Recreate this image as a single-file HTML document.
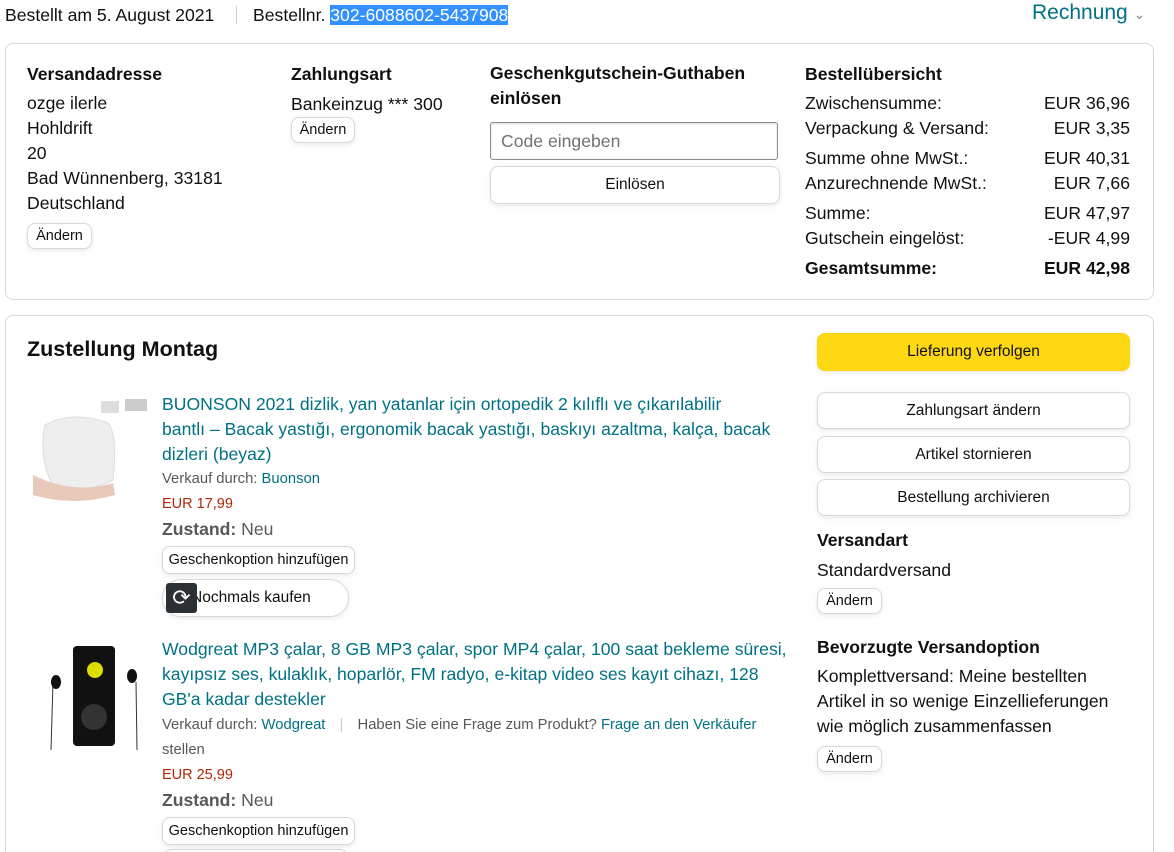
<!DOCTYPE html>
<html><head><meta charset="utf-8"><style>
*{box-sizing:border-box;margin:0;padding:0}
html,body{width:1174px;height:852px;overflow:hidden}
body{background:#fff;font-family:"Liberation Sans",Arial,sans-serif;color:#0f1111;font-size:17.6px;position:relative}
.a{position:absolute;white-space:nowrap}
.box{position:absolute;border:1px solid #d5d9d9;border-radius:8px}
.b{font-weight:bold}
.btn{position:absolute;border:1px solid #d5d9d9;border-radius:8px;background:#fff;box-shadow:0 2px 5px rgba(213,217,217,.5);font-size:14.5px;text-align:center;display:flex;align-items:center;justify-content:center}
.big{font-size:15.5px;border-radius:8px}
.link{color:#007185}
.sm{font-size:14.8px;color:#565959}
.pr{font-size:14.5px;color:#b12704}
.lh{line-height:25px}
</style></head><body>
<div class="a" style="left:5px;top:5px">Bestellt am 5. August 2021</div>
<div class="a" style="left:236px;top:6px;width:1px;height:18px;background:#ccc"></div>
<div class="a" style="left:253px;top:5px">Bestellnr. <span style="background:#3390ff;color:#fff">302-6088602-5437908</span></div>
<div class="a link" style="left:1032px;top:1px;font-size:21px">Rechnung <span style="color:#888;font-size:14px">&#8964;</span></div>

<div class="box" style="left:5px;top:43px;width:1149px;height:257px"></div>
<div class="a b" style="left:27px;top:64px">Versandadresse</div>
<div class="a lh" style="left:27px;top:91px">ozge ilerle<br>Hohldrift<br>20<br>Bad Wünnenberg, 33181<br>Deutschland</div>
<div class="btn" style="left:27px;top:223px;width:65px;height:26px">Ändern</div>
<div class="a b" style="left:291px;top:64px">Zahlungsart</div>
<div class="a" style="left:291px;top:94px">Bankeinzug *** 300</div>
<div class="btn" style="left:291px;top:117px;width:64px;height:26px">Ändern</div>
<div class="a b lh" style="left:490px;top:61px">Geschenkgutschein-Guthaben<br>einlösen</div>
<div class="a" style="left:490px;top:122px;width:288px;height:38px;border:1px solid #888c8c;border-radius:3px;padding:8px 10px;color:#6f7373;box-shadow:inset 0 1px 2px rgba(15,17,17,.15)">Code eingeben</div>
<div class="btn big" style="left:490px;top:166px;width:290px;height:38px">Einlösen</div>
<div class="a b" style="left:805px;top:64px">Bestellübersicht</div>
<div class="a" style="left:805px;top:91px;width:325px;line-height:25px">
<div style="display:flex;justify-content:space-between"><span>Zwischensumme:</span><span>EUR 36,96</span></div>
<div style="display:flex;justify-content:space-between"><span>Verpackung &amp; Versand:</span><span>EUR 3,35</span></div>
<div style="display:flex;justify-content:space-between;margin-top:5px"><span>Summe ohne MwSt.:</span><span>EUR 40,31</span></div>
<div style="display:flex;justify-content:space-between"><span>Anzurechnende MwSt.:</span><span>EUR 7,66</span></div>
<div style="display:flex;justify-content:space-between;margin-top:5px"><span>Summe:</span><span>EUR 47,97</span></div>
<div style="display:flex;justify-content:space-between"><span>Gutschein eingelöst:</span><span>-EUR 4,99</span></div>
<div class="b" style="display:flex;justify-content:space-between;margin-top:5px"><span>Gesamtsumme:</span><span>EUR 42,98</span></div>
</div>

<div class="box" style="left:5px;top:315px;width:1149px;height:560px"></div>
<div class="a b" style="left:27px;top:337px;font-size:21.5px">Zustellung Montag</div>

<svg class="a" style="left:33px;top:395px" width="115" height="110"><rect x="68" y="6" width="18" height="12" fill="#ddd"/><rect x="92" y="4" width="22" height="12" fill="#ccc"/><path d="M12 30 Q40 15 75 28 Q85 40 80 85 Q50 100 20 92 Q5 60 12 30Z" fill="#eee" stroke="#ddd"/><path d="M0 80 Q40 100 80 88 L82 100 Q40 112 0 100Z" fill="#e8c8b8"/></svg>
<div class="a link lh" style="left:162px;top:392px">BUONSON 2021 dizlik, yan yatanlar için ortopedik 2 kılıflı ve çıkarılabilir<br>bantlı – Bacak yastığı, ergonomik bacak yastığı, baskıyı azaltma, kalça, bacak<br>dizleri (beyaz)</div>
<div class="a sm" style="left:162px;top:471px">Verkauf durch: <span class="link">Buonson</span></div>
<div class="a pr" style="left:162px;top:496px">EUR 17,99</div>
<div class="a" style="left:162px;top:519px;color:#565959"><b>Zustand:</b> Neu</div>
<div class="btn" style="left:162px;top:546px;width:193px;height:28px">Geschenkoption hinzufügen</div>
<div class="btn big" style="left:162px;top:579px;width:187px;height:38px;border-radius:19px;justify-content:flex-start;padding-left:28px">Nochmals kaufen</div>
<div class="a" style="left:166px;top:583px;width:31px;height:30px;background:#2b3035;border-radius:3px;color:#fff;font-size:22px;text-align:center;line-height:30px">&#10227;</div>

<svg class="a" style="left:45px;top:642px" width="95" height="110"><path d="M8 40 L6 108" stroke="#333"/><ellipse cx="11" cy="40" rx="5" ry="7" fill="#111"/><path d="M91 40 L92 108" stroke="#333"/><ellipse cx="87" cy="34" rx="5" ry="7" fill="#111"/><rect x="28" y="4" width="42" height="100" rx="4" fill="#111"/><circle cx="50" cy="28" r="8" fill="#dd0"/><circle cx="49" cy="75" r="13" fill="#333"/></svg>
<div class="a link lh" style="left:162px;top:637px">Wodgreat MP3 çalar, 8 GB MP3 çalar, spor MP4 çalar, 100 saat bekleme süresi,<br>kayıpsız ses, kulaklık, hoparlör, FM radyo, e-kitap video ses kayıt cihazı, 128<br>GB'a kadar destekler</div>
<div class="a sm" style="left:162px;top:717px">Verkauf durch: <span class="link">Wodgreat</span> <span style="color:#ccc;margin:0 10px">|</span> Haben Sie eine Frage zum Produkt? <span class="link">Frage an den Verkäufer</span></div>
<div class="a sm link" style="left:162px;top:742px">stellen</div>
<div class="a pr" style="left:162px;top:767px">EUR 25,99</div>
<div class="a" style="left:162px;top:790px;color:#565959"><b>Zustand:</b> Neu</div>
<div class="btn" style="left:162px;top:817px;width:193px;height:28px">Geschenkoption hinzufügen</div>
<div class="btn" style="left:162px;top:849px;width:187px;height:20px;border-radius:19px"></div>

<div class="btn big" style="left:817px;top:333px;width:313px;height:38px;background:#ffd814;border-color:#fcd200">Lieferung verfolgen</div>
<div class="btn big" style="left:817px;top:392px;width:313px;height:37px">Zahlungsart ändern</div>
<div class="btn big" style="left:817px;top:436px;width:313px;height:37px">Artikel stornieren</div>
<div class="btn big" style="left:817px;top:479px;width:313px;height:37px">Bestellung archivieren</div>
<div class="a b" style="left:817px;top:530px">Versandart</div>
<div class="a" style="left:817px;top:560px">Standardversand</div>
<div class="btn" style="left:817px;top:588px;width:65px;height:26px">Ändern</div>
<div class="a b" style="left:817px;top:637px">Bevorzugte Versandoption</div>
<div class="a lh" style="left:817px;top:664px">Komplettversand: Meine bestellten<br>Artikel in so wenige Einzellieferungen<br>wie möglich zusammenfassen</div>
<div class="btn" style="left:817px;top:746px;width:65px;height:26px">Ändern</div>
</body></html>
